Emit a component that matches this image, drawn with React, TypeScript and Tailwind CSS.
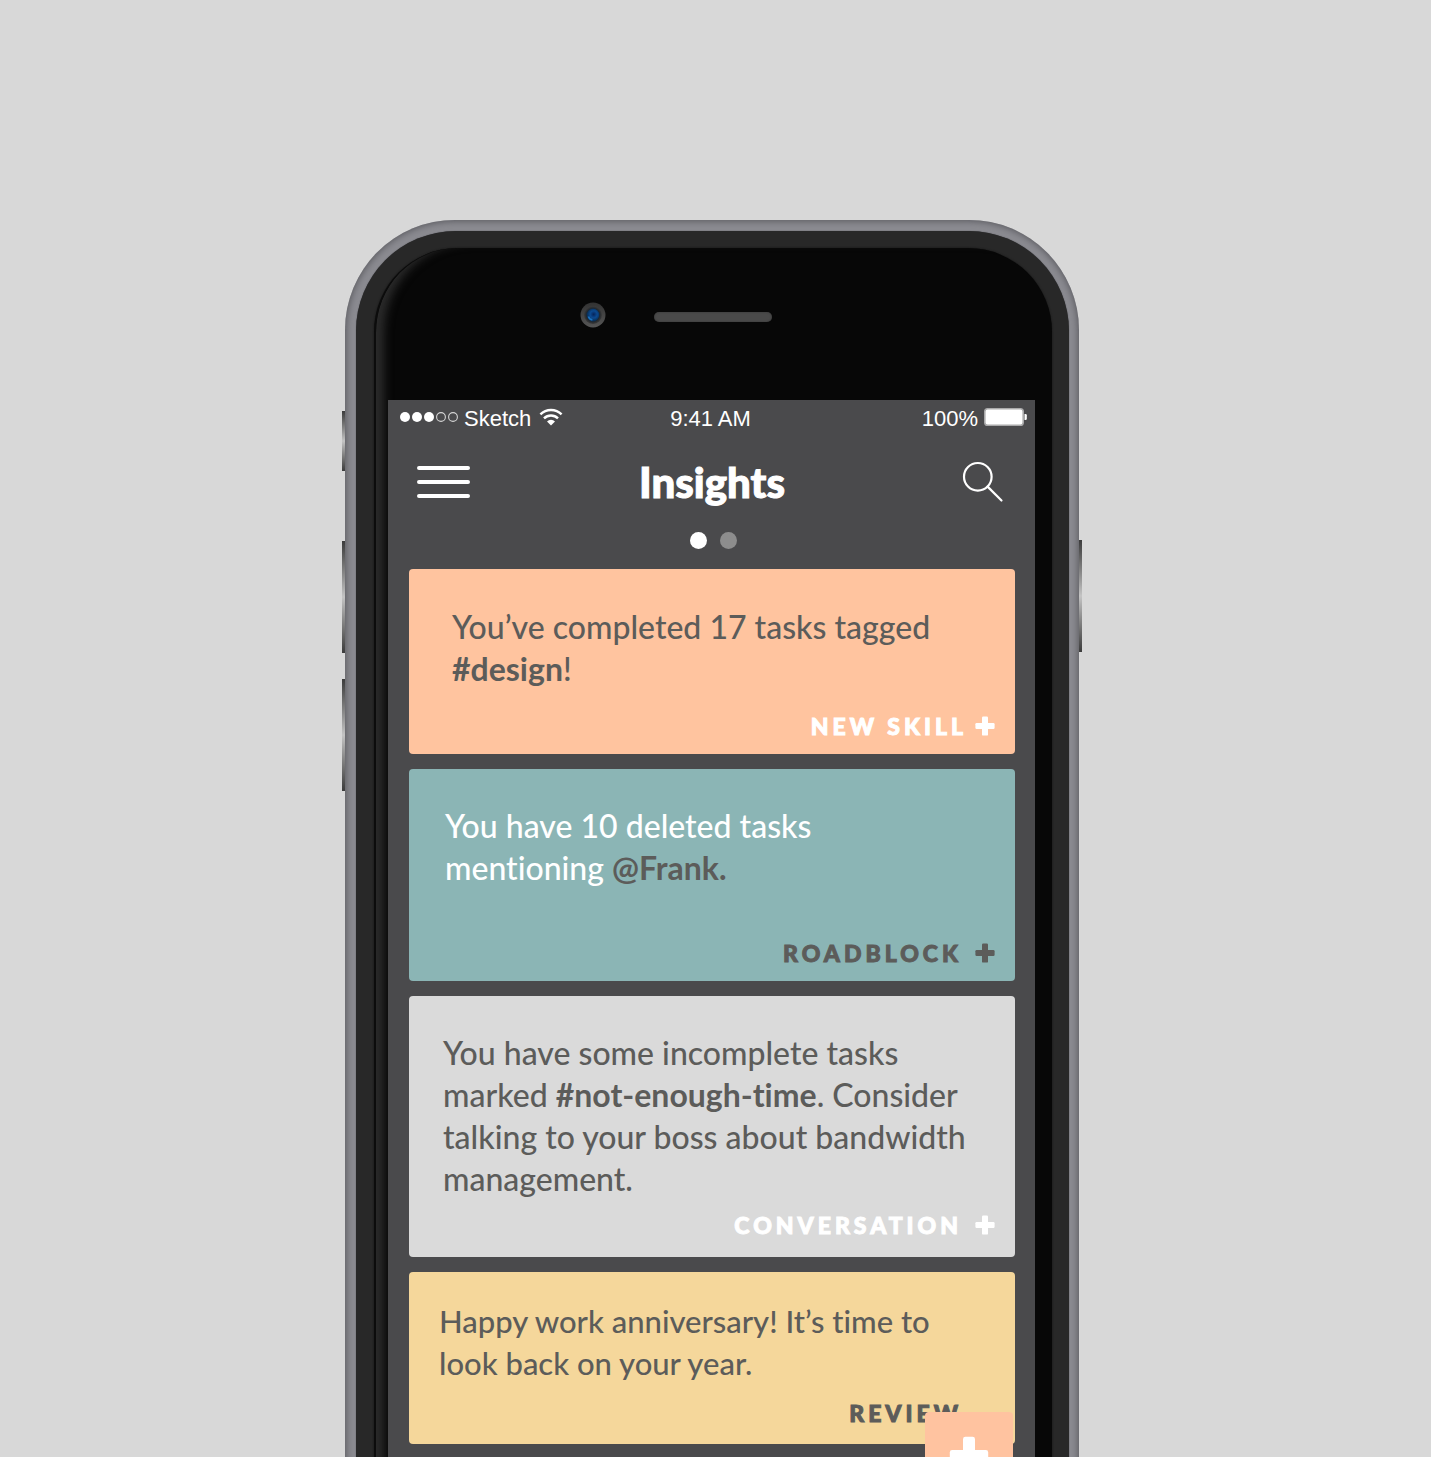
import React from "react";

type Insight = {
  lead: string;
  strong: string;
  tail: string;
  action: string;
  hasPlus: boolean;
  card: string;
  text: string;
  strongText: string;
  label: string;
};

const insights: Insight[] = [
  {
    lead: "You’ve completed 17 tasks tagged ",
    strong: "#design",
    tail: "!",
    action: "New skill",
    hasPlus: true,
    card: "bg-[#ffc49f] pt-[37px] pb-[16px] pl-[43px]",
    text: "pr-[20px] text-[32px] text-[#5c5c5a]",
    strongText: "",
    label: "mt-[24px] gap-[8px] text-white",
  },
  {
    lead: "You have 10 deleted tasks mentioning ",
    strong: "@Frank.",
    tail: "",
    action: "Roadblock",
    hasPlus: true,
    card: "bg-[#8bb5b5] pt-[36px] pb-[16px] pl-[36px]",
    text: "pr-[100px] text-[32px] text-white",
    strongText: "text-[#5c5c5a]",
    label: "mt-[52px] gap-[13px] text-[#5c5c5a]",
  },
  {
    lead: "You have some incomplete tasks marked ",
    strong: "#not-enough-time",
    tail: ". Consider talking to your boss about bandwidth management.",
    action: "Conversation",
    hasPlus: true,
    card: "bg-[#dadada] pt-[36px] pb-[20px] pl-[34px]",
    text: "pr-[20px] text-[32px] text-[#5c5c5a]",
    strongText: "",
    label: "mt-[13px] gap-[13px] text-white",
  },
  {
    lead: "Happy work anniversary! It’s time to look back on your year.",
    strong: "",
    tail: "",
    action: "Review",
    hasPlus: false,
    card: "bg-[#f5d79b] pt-[28px] pb-[19px] pl-[30px]",
    text: "pr-[20px] text-[31px] text-[#5c5c5a]",
    strongText: "",
    label: "mt-[17px] mr-[33px] text-[#5c5c5a]",
  },
];

function Plus({ className }: { className: string }) {
  return (
    <svg viewBox="0 0 20 20" className={className} fill="currentColor" aria-hidden="true">
      <rect x="0.4" y="7" width="19.2" height="6" rx="1.2" />
      <rect x="7" y="0.4" width="6" height="19.2" rx="1.2" />
    </svg>
  );
}

function StatusBar() {
  return (
    <div className="grid grid-cols-[1fr_auto_1fr] items-center pt-[5px] pr-[8px] pl-[11px] font-['Liberation_Sans',Arial,sans-serif] text-[22px] leading-[28px] text-white">
      <div className="flex items-center gap-[5px]">
        <svg viewBox="0 0 60 12" className="mb-[4px] h-[12px] w-[60px]" aria-hidden="true">
          <circle cx="6" cy="6" r="5" fill="#fff" />
          <circle cx="18" cy="6" r="5" fill="#fff" />
          <circle cx="30" cy="6" r="5" fill="#fff" />
          <circle cx="42" cy="6" r="4.4" fill="none" stroke="#d5d5d5" strokeWidth="1.1" />
          <circle cx="54" cy="6" r="4.4" fill="none" stroke="#d5d5d5" strokeWidth="1.1" />
        </svg>
        <span>Sketch</span>
        <svg viewBox="0 0 24 18" className="mb-[4px] ml-[3px] h-[18px] w-[24px]" fill="none" stroke="#fff" strokeWidth="2.4" aria-hidden="true">
          <path d="M1.4 6.4a15 15 0 0 1 21.2 0" />
          <path d="M5 10.3a10 10 0 0 1 14 0" />
          <path d="M12 17.4l-4-4a5.6 5.6 0 0 1 8 0z" fill="#fff" stroke="none" />
        </svg>
      </div>
      <span className="pr-[5px]">9:41 AM</span>
      <div className="flex items-center justify-end gap-[6px]">
        <span>100%</span>
        <svg viewBox="0 0 43 18" className="mb-[4px] h-[18px] w-[43px]" aria-hidden="true">
          <rect x="0.8" y="0.8" width="38.4" height="16.4" rx="2.8" fill="#fff" stroke="#a9a9aa" strokeWidth="1.6" />
          <path d="M40.5 6h1a1.3 1.3 0 0 1 1.3 1.3v3.4a1.3 1.3 0 0 1-1.3 1.3h-1z" fill="#fff" />
        </svg>
      </div>
    </div>
  );
}

function NavBar() {
  return (
    <header className="grid grid-cols-[1fr_auto_1fr] items-center pt-[23px] pr-[31px] pl-[28px] text-white">
      <button type="button" aria-label="Menu" className="flex w-[55px] justify-self-start">
        <svg viewBox="0 0 55 36" className="h-[36px] w-[55px]" stroke="currentColor" strokeWidth="4" strokeLinecap="round" aria-hidden="true">
          <path d="M3 4h49M3 18h49M3 32h49" />
        </svg>
      </button>
      <h1 className="pl-[4px] text-[42px] leading-[52px] font-black [-webkit-text-stroke:1px_white]">Insights</h1>
      <button type="button" aria-label="Search" className="flex w-[42px] justify-self-end">
        <svg viewBox="0 0 42 42" className="h-[42px] w-[42px]" fill="none" stroke="currentColor" strokeWidth="2.2" strokeLinecap="round" aria-hidden="true">
          <circle cx="15.8" cy="15.8" r="13.8" />
          <path d="M25.6 25.6L39.5 39.5" />
        </svg>
      </button>
    </header>
  );
}

function Card({ item }: { item: Insight }) {
  return (
    <li className={`flex flex-col rounded-[4px] pr-[20px] ${item.card}`}>
      <p className={`leading-[42px] font-medium [font-variant-ligatures:none] ${item.text}`}>
        {item.lead}
        {item.strong && <strong className={`font-bold ${item.strongText}`}>{item.strong}</strong>}
        {item.tail}
      </p>
      <button
        type="button"
        className={`flex items-center self-end text-[23px] leading-[24px] font-black tracking-[4px] uppercase [-webkit-text-stroke:1px_currentColor] ${item.label}`}
      >
        {item.action}
        {item.hasPlus && <Plus className="h-[20px] w-[20px]" />}
      </button>
    </li>
  );
}

const sideKey = "absolute w-[4px] bg-linear-to-b from-[#3c3c3c] via-[#c4c4c4] to-[#3c3c3c]";

export default function App() {
  return (
    <main className="flex h-screen justify-center overflow-hidden border-r border-b border-white bg-[#d8d8d8] pt-[220px] pr-[7px] font-['Lato',sans-serif]">
      <div className="relative h-max w-full max-w-[734px] shrink-0">
        <span className={`${sideKey} top-[191px] -left-[3px] h-[60px]`} />
        <span className={`${sideKey} top-[321px] -left-[3px] h-[112px]`} />
        <span className={`${sideKey} top-[459px] -left-[3px] h-[112px]`} />
        <span className={`${sideKey} top-[320px] -right-[3px] h-[112px]`} />

        <div className="relative rounded-[110px] bg-[#8b8b91] pt-[11px] pr-[10px] pb-[11px] pl-[11px] shadow-[inset_0_0_7px_1px_#58585d]">
          <div className="rounded-[100px] bg-[#282828] pt-[17px] pr-[17px] pb-[17px] pl-[18px] shadow-[0_0_1px_0_#303034]">
            <div className="rounded-[84px] border-l-2 border-[#0c0c0c] bg-[#070707] pr-[17px] pb-[152px] pl-[12px] shadow-[inset_14px_0_10px_-6px_#2b2b2b,0_0_2px_0_#111111]">
              <div className="grid h-[152px] grid-cols-[1fr_auto_1fr] items-center pb-[15px] pl-[3px]">
                <svg viewBox="0 0 28 28" className="mr-[47px] mb-[3px] h-[28px] w-[28px] justify-self-end" aria-hidden="true">
                  <defs>
                    <linearGradient id="lensRing" x1="0" y1="0" x2="0" y2="1">
                      <stop offset="0" stopColor="#323232" />
                      <stop offset="1" stopColor="#565656" />
                    </linearGradient>
                    <radialGradient id="lensWell">
                      <stop offset="0.55" stopColor="#101820" />
                      <stop offset="1" stopColor="#3c3c3c" />
                    </radialGradient>
                    <radialGradient id="lensGlass" cx="0.55" cy="0.45">
                      <stop offset="0" stopColor="#06245a" />
                      <stop offset="0.55" stopColor="#0b4a92" />
                      <stop offset="1" stopColor="#0a3058" />
                    </radialGradient>
                  </defs>
                  <circle cx="14" cy="14" r="12.5" fill="url(#lensRing)" />
                  <circle cx="14" cy="14" r="9" fill="url(#lensWell)" />
                  <circle cx="14" cy="14" r="6.4" fill="url(#lensGlass)" />
                  <path d="M9.4 15.5a5 5 0 0 0 4 3.4" fill="none" stroke="#1a72c0" strokeWidth="1.6" />
                </svg>
                <span className="h-[10px] w-[118px] rounded-full bg-[#4a4a4a] shadow-[inset_0_0_2px_#333333]" />
              </div>

              <div className="relative bg-[#4a4a4c]">
                <StatusBar />
                <NavBar />
                <div className="flex justify-center gap-[13px] pt-[24px] pb-[20px] pl-[3px]">
                  <button type="button" aria-label="Page 1" className="h-[17px] w-[17px] rounded-full bg-white" />
                  <button type="button" aria-label="Page 2" className="h-[17px] w-[17px] rounded-full bg-[#8d8d8d]" />
                </div>
                <ul className="flex flex-col gap-[15px] pr-[20px] pb-[106px] pl-[21px]">
                  {insights.map((item) => (
                    <Card key={item.action} item={item} />
                  ))}
                </ul>
                <button
                  type="button"
                  aria-label="Add"
                  className="absolute right-[22px] bottom-[50px] flex h-[88px] w-[88px] items-center justify-center rounded-[4px] bg-[#ffc3a0] text-white"
                >
                  <Plus className="h-[40px] w-[40px]" />
                </button>
              </div>
            </div>
          </div>
        </div>
      </div>
    </main>
  );
}
